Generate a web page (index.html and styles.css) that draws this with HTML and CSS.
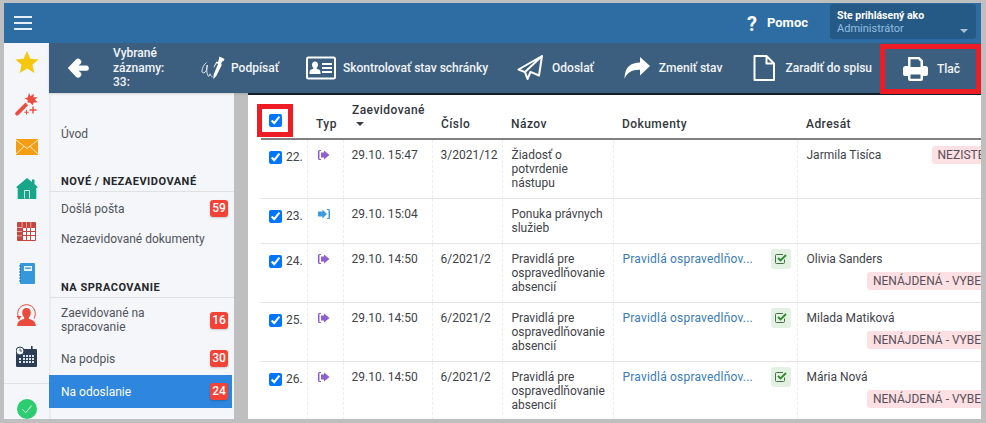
FILE: index.html
```html
<!DOCTYPE html>
<html lang="sk">
<head>
<meta charset="utf-8">
<title>Na odoslanie</title>
<link rel="stylesheet" href="styles.css">
</head>
<body>
<div class="app">
  <header class="topbar">
    <button class="burger" aria-label="Menu"><span></span><span></span><span></span></button>
    <div class="help"><span class="help-q">?</span><span class="help-t">Pomoc</span></div>
    <div class="user">
      <div class="user-l">Ste prihlásený ako</div>
      <div class="user-n">Administrátor</div>
      <i class="user-caret"></i>
    </div>
  </header>
  <div class="body">
    <nav class="rail">
      <svg class="ri ri-star" width="24" height="22" viewBox="0 0 24 22"><polygon fill="#f5c70f" points="12,0 15.4,7.8 23.6,8.4 17.4,13.8 19.3,22 12,17.6 4.7,22 6.6,13.8 .4,8.4 8.6,7.8"/></svg>
      <svg class="ri ri-wand" width="23" height="23" viewBox="0 0 23 23"><g fill="#ec4c3f"><path d="M.8 19.300 10.500 9.600l2.600 2.600-9.700 9.700a1.800 1.800 0 0 1-2.600-2.600z"/><polygon points="14,0 15.500,3.200 18.800,.8 18.500,4.300 22.500,4.200 19.800,6.800 22.800,9.300 18.800,9.500 17.500,12.300 15,9.500 12.500,9.800 12.800,7 9.500,5.600 12.800,4.300"/><path d="M17.300 13.500h1.400v2.800h2.800v1.400h-2.800v2.800h-1.400v-2.800h-2.800v-1.400h2.800zM11 17h1v1.700h1.700v1H12v1.800h-1v-1.800H9.300v-1H11z"/></g></svg>
      <svg class="ri ri-mail" width="22" height="16" viewBox="0 0 22 16"><rect width="22" height="16" fill="#f59d13"/><path d="M0 1 11 9.500 22 1M0 15 8 7.500M22 15 14 7.500" fill="none" stroke="#fff" stroke-width=".8"/></svg>
      <svg class="ri ri-home" width="22" height="21" viewBox="0 0 22 21"><path fill="#17a689" d="M11 0 16 4V1.500h2.500V6L22 9.300 20.300 10V21H1.700V10L0 9.300z"/><path fill="none" stroke="#d5f1ea" d="M8.500 20.500V12.500h5v8"/></svg>
      <svg class="ri ri-cal" width="19" height="19" viewBox="0 0 19 19"><rect width="19" height="19" rx="1" fill="#c7453f"/><path fill="#fff" d="M6 6h3v3H6zM10 6h3v3h-3zM14 6h4v3h-4zM6 10h3v3H6zM10 10h3v3h-3zM14 10h4v3h-4zM6 14h3v4H6zM10 14h3v4h-3zM14 14h4v4h-4z"/><path fill="#f0c9c7" d="M4.700 0h.7v6h-.7zM9.300 0h.7v5.700h-.7zM13.500 0h.7v5.700h-.7zM0 5h5v.7H0zM0 9.300h5v.7H0zM0 13.500h5v.7H0z"/></svg>
      <svg class="ri ri-book" width="16" height="21" viewBox="0 0 16 21"><rect x="1" width="15" height="21" rx="1" fill="#3498db"/><rect x="5" y="3" width="8" height="5" fill="#e8f3fb"/><rect x="6.200" y="4.500" width="5.600" height="1.400" fill="#3498db"/><path d="M0 3h2M0 6h2M0 9h2M0 12h2M0 15h2M0 18h2" stroke="#1f6fa8"/></svg>
      <svg class="ri ri-person" width="21" height="22" viewBox="0 0 21 22"><g fill="#ea4b3c"><path d="M10.500 4c2.700 0 4.300 2 4.300 4.600 0 2-.8 3.800-2 4.900v1.200c2.500 1 7 1.800 7 7.300H1.200c0-5.500 4.500-6.300 7-7.300v-1.200c-1.200-1.100-2-2.900-2-4.900C6.200 6 7.800 4 10.500 4z"/><path fill="none" stroke="#ea4b3c" d="M3 14.500C-.5 8 3.500.7 10.500.7c7 0 11 7.300 7.500 13.800"/><path d="M.5 12h5L3 16z"/></g></svg>
      <svg class="ri ri-clock" width="21" height="21" viewBox="0 0 21 21"><rect y="3" width="21" height="18" rx="1" fill="#2c3e55"/><path fill="#dfe4ea" d="M7 9h2v2H7zM10 9h2v2h-2zM13 9h2v2h-2zM16 9h2v2h-2zM7 12h2v2H7zM10 12h2v2h-2zM13 12h2v2h-2zM16 12h2v2h-2zM7 15h2v2H7zM10 15h2v2h-2zM13 15h2v2h-2zM16 15h2v2h-2zM3 15h2v2H3zM3 12h2v2H3z"/><rect x="15" width="1.600" height="4" fill="#2c3e55"/><circle cx="4" cy="5" r="4" fill="#f4f6f9" stroke="#2c3e55"/><path d="M4 2.500V5h2" fill="none" stroke="#2c3e55" stroke-width=".8"/></svg>
      <div class="rail-sep"></div>
      <svg class="ri ri-ok" width="20" height="20" viewBox="0 0 20 20"><circle cx="10" cy="10" r="10" fill="#2ecc71"/><path d="M5.500 10.500 8.700 13.700 14.700 6.500" fill="none" stroke="#e8fff1" stroke-width="1"/></svg>
    </nav>
    <div class="content">
      <div class="toolbar">
        <svg class="tb-back" width="22" height="22" viewBox="0 0 22 22"><path fill="#fff" d="M11 1.500c.8 0 1.400.4 2 1l.600.6c1.100 1.100 1.100 2.700 0 3.700L11.500 8.500h8c1.400 0 2.300 1 2.300 2.300v.6c0 1.300-.9 2.300-2.300 2.300h-8l2.100 1.900c1.100 1 1.100 2.600 0 3.700l-.6.600c-1.100 1.100-2.800 1.100-3.800 0L.8 11 9 2.600c.5-.7 1.200-1.100 2-1.100z"/></svg>
        <div class="tb-count">Vybrané záznamy:<br>33:</div>
        <div class="tool tool-sign">
          <svg width="24" height="24" viewBox="0 0 24 24"><path fill="#fff" d="M18.500.5 23.500 3 22.600 5l-1.200.2-1.400 2.800.9.700-5.500 11-2.900 3.200-.2-1.200.4-3.200 4.300-10.600-1.400-.7-2.500 4.300-.6-.4 3-5.600 1.500.7z"/><path fill="none" stroke="#fff" stroke-width=".8" d="M5.500 6.500C3 8.500 1 12 1 15c0 2 1.500 2.500 3 1.300C5.800 14.500 6.500 11 6.200 9c-.7 3-.8 8 1 11 1 1.300 1.300-1.500 1.800-2.200.5 1 1 2.800 2.500 3"/></svg>
          <span>Podpísať</span>
        </div>
        <div class="tool tool-check">
          <svg width="30" height="24" viewBox="0 0 30 24"><rect x="1" y="1.500" width="28" height="21" rx="1.500" fill="none" stroke="#fff" stroke-width="2"/><path fill="#fff" d="M9 5.500c2 0 3 1.400 3 3.200 0 1.200-.5 2.300-1.300 3v1c2 .5 3.800 1 3.800 4v1.300h-11V16.700c0-3 1.800-3.500 3.800-4v-1c-.8-.7-1.300-1.800-1.300-3C6 6.900 7 5.500 9 5.500zM16 7h10v2H16zM16 11h10v2H16zM16 15h10v2H16z"/></svg>
          <span>Skontrolovať stav schránky</span>
        </div>
        <div class="tool tool-send">
          <svg width="26" height="26" viewBox="0 0 26 26"><path fill="none" stroke="#fff" stroke-width="2" stroke-linejoin="round" d="M25 1 1.500 14.500l6.500 2.600L25 1 22 20.500l-8.500-3.600L10.500 24 8 17.100"/></svg>
          <span>Odoslať</span>
        </div>
        <div class="tool tool-share">
          <svg width="26" height="24" viewBox="0 0 26 24"><path fill="#fff" d="M16 1v5.500C7 6.800 .5 10.500.5 23c2.500-6.500 7.500-9.500 15.500-9.300V19.500L26 10z"/></svg>
          <span>Zmeniť stav</span>
        </div>
        <div class="tool tool-doc">
          <svg width="22" height="26" viewBox="0 0 22 26"><path fill="none" stroke="#fff" stroke-width="2" stroke-linejoin="round" d="M1.500 1h12L21 8.500V25H1.500zM13.500 1v7.500H21"/></svg>
          <span>Zaradiť do spisu</span>
        </div>
        <div class="tool tool-print">
          <svg width="25" height="24" viewBox="0 0 25 24"><path fill="#fff" d="M5 0h11.500L20 3.500V9h2.500A2.500 2.500 0 0 1 25 11.500V17a2 2 0 0 1-2 2h-3v3a2 2 0 0 1-2 2H7a2 2 0 0 1-2-2v-3H2a2 2 0 0 1-2-2V11.500A2.500 2.500 0 0 1 2.500 9H5zM7.500 2.300V10h10V4.800L15.200 2.300zM7.500 17.500V21.700h10V17.500z"/></svg>
          <span>Tlač</span>
        </div>
      </div>
      <div class="panes">
        <aside class="side">
          <a class="s-item s-uvod">Úvod</a>
          <h3 class="s-head">NOVÉ / NEZAEVIDOVANÉ</h3>
          <a class="s-item s-post">Došlá pošta<b class="cnt">59</b></a>
          <a class="s-item s-nez">Nezaevidované dokumenty</a>
          <h3 class="s-head s-head2">NA SPRACOVANIE</h3>
          <a class="s-item s-zae"><span>Zaevidované na<br>spracovanie</span><b class="cnt">16</b></a>
          <a class="s-item s-pod">Na podpis<b class="cnt">30</b></a>
          <a class="s-item s-act">Na odoslanie<b class="cnt">24</b></a>
        </aside>
        <main class="main">
          <table class="grid">
            <colgroup>
              <col class="c1"><col class="c2"><col class="c3"><col class="c4"><col class="c5"><col class="c6"><col class="c7">
            </colgroup>
            <thead>
              <tr>
                <th class="th-check"><input type="checkbox" checked><span class="hl"></span></th>
                <th>Typ</th>
                <th>Zaevidované<br><i class="sort"></i></th>
                <th>Číslo</th>
                <th>Názov</th>
                <th>Dokumenty</th>
                <th>Adresát</th>
              </tr>
            </thead>
            <tbody>
              <tr>
                <td class="num"><input type="checkbox" checked><span>22.</span></td>
                <td><svg class="ty ty-out" width="12" height="10" viewBox="0 0 12 10"><path fill="#8e5fd3" d="M6 2.500V.5L11.500 5 6 9.500v-2H3v-5zM0 1.500A1.500 1.500 0 0 1 1.500 0H3v1H1.500v8H3v1H1.500A1.500 1.500 0 0 1 0 8.500z"/></svg></td>
                <td>29.10. 15:47</td>
                <td>3/2021/12</td>
                <td>Žiadosť o potvrdenie nástupu</td>
                <td></td>
                <td><div class="addr"><span>Jarmila Tisíca</span><span class="badge badge-inline">NEZISTENÁ</span></div></td>
              </tr>
              <tr>
                <td class="num"><input type="checkbox" checked><span>23.</span></td>
                <td><svg class="ty" width="12" height="10" viewBox="0 0 12 10"><path fill="#3f9ae0" d="M4.500 2.500V.5L9 5 4.500 9.500v-2H0v-5zM9 0h1.500A1.500 1.500 0 0 1 12 1.500v7A1.500 1.500 0 0 1 10.500 10H9V9h1.500V1H9z"/></svg></td>
                <td>29.10. 15:04</td>
                <td></td>
                <td>Ponuka právnych služieb</td>
                <td></td>
                <td></td>
              </tr>
              <tr>
                <td class="num"><input type="checkbox" checked><span>24.</span></td>
                <td><svg class="ty ty-out" width="12" height="10" viewBox="0 0 12 10"><path fill="#8e5fd3" d="M6 2.500V.5L11.500 5 6 9.500v-2H3v-5zM0 1.500A1.500 1.500 0 0 1 1.500 0H3v1H1.500v8H3v1H1.500A1.500 1.500 0 0 1 0 8.500z"/></svg></td>
                <td>29.10. 14:50</td>
                <td>6/2021/2</td>
                <td>Pravidlá pre ospravedlňovanie absencií</td>
                <td><div class="doc"><a>Pravidlá ospravedlňov...</a><span class="sig"><svg width="12" height="12" viewBox="0 0 12 12"><path fill="none" stroke="#4a6b4a" d="M9.500 6.500v3a1 1 0 0 1-1 1h-7a1 1 0 0 1-1-1v-7a1 1 0 0 1 1-1H8"/><path fill="none" stroke="#2e8b2e" stroke-width="1.800" d="M3 5l2.500 2.500L11 2"/></svg></span></div></td>
                <td><div class="addr"><span>Olivia Sanders</span><span class="badge">NENÁJDENÁ - VYBERTE</span></div></td>
              </tr>
              <tr>
                <td class="num"><input type="checkbox" checked><span>25.</span></td>
                <td><svg class="ty ty-out" width="12" height="10" viewBox="0 0 12 10"><path fill="#8e5fd3" d="M6 2.500V.5L11.500 5 6 9.500v-2H3v-5zM0 1.500A1.500 1.500 0 0 1 1.500 0H3v1H1.500v8H3v1H1.500A1.500 1.500 0 0 1 0 8.500z"/></svg></td>
                <td>29.10. 14:50</td>
                <td>6/2021/2</td>
                <td>Pravidlá pre ospravedlňovanie absencií</td>
                <td><div class="doc"><a>Pravidlá ospravedlňov...</a><span class="sig"><svg width="12" height="12" viewBox="0 0 12 12"><path fill="none" stroke="#4a6b4a" d="M9.500 6.500v3a1 1 0 0 1-1 1h-7a1 1 0 0 1-1-1v-7a1 1 0 0 1 1-1H8"/><path fill="none" stroke="#2e8b2e" stroke-width="1.800" d="M3 5l2.500 2.500L11 2"/></svg></span></div></td>
                <td><div class="addr"><span>Milada Matiková</span><span class="badge">NENÁJDENÁ - VYBERTE</span></div></td>
              </tr>
              <tr>
                <td class="num"><input type="checkbox" checked><span>26.</span></td>
                <td><svg class="ty ty-out" width="12" height="10" viewBox="0 0 12 10"><path fill="#8e5fd3" d="M6 2.500V.5L11.500 5 6 9.500v-2H3v-5zM0 1.500A1.500 1.500 0 0 1 1.500 0H3v1H1.500v8H3v1H1.500A1.500 1.500 0 0 1 0 8.500z"/></svg></td>
                <td>29.10. 14:50</td>
                <td>6/2021/2</td>
                <td>Pravidlá pre ospravedlňovanie absencií</td>
                <td><div class="doc"><a>Pravidlá ospravedlňov...</a><span class="sig"><svg width="12" height="12" viewBox="0 0 12 12"><path fill="none" stroke="#4a6b4a" d="M9.500 6.500v3a1 1 0 0 1-1 1h-7a1 1 0 0 1-1-1v-7a1 1 0 0 1 1-1H8"/><path fill="none" stroke="#2e8b2e" stroke-width="1.800" d="M3 5l2.500 2.500L11 2"/></svg></span></div></td>
                <td><div class="addr"><span>Mária Nová</span><span class="badge">NENÁJDENÁ - VYBERTE</span></div></td>
              </tr>
            </tbody>
          </table>
        </main>
      </div>
    </div>
  </div>
</div>
</body>
</html>
```

FILE: styles.css
```css
* { box-sizing: border-box; }
html, body { margin: 0; height: 100%; }
body {
  background: #bfbfbf;
  font-family: Roboto, "Liberation Sans", sans-serif;
  font-size: 12px;
  line-height: 14px;
  color: #3f4247;
  overflow: hidden;
}
.app {
  position: absolute;
  left: 4px;
  top: 3px;
  width: 977px;
  height: 416px;
  display: flex;
  flex-direction: column;
  overflow: hidden;
}
.topbar {
  height: 40px;
  flex: none;
  background: #2d6da3;
  display: flex;
  align-items: center;
  padding-right: 5px;
}
.burger {
  width: 18px;
  margin-left: 10px;
  padding: 0;
  background: none;
  border: 0;
  display: flex;
  flex-direction: column;
  gap: 4px;
}
.burger span { display: block; height: 2px; background: #e6eef5; }
.help { margin-left: auto; display: flex; align-items: center; color: #fff; font-weight: 700; }
.help-q { font-size: 20px; width: 20px; padding-top: 1px; }
.help-t { font-size: 13px; }
.user {
  position: relative;
  margin-left: 22px;
  width: 146px;
  height: 35px;
  margin-top: -3px;
  padding: 5px 7px;
  background: #255a87;
  border-radius: 3px;
}
.user-l { color: #fff; font-weight: 700; font-size: 10.500px; line-height: 13px; }
.user-n { color: #93bde0; font-size: 11px; line-height: 14px; }
.user-caret {
  position: absolute;
  right: 8px;
  top: 25px;
  border: 4px solid transparent;
  border-top-color: #a9c2d8;
  border-bottom: 0;
}
.body { flex: 1; display: flex; min-height: 0; }
.rail {
  width: 45px;
  flex: none;
  background: #f4f6f9;
  display: flex;
  flex-direction: column;
  align-items: center;
  padding-top: 8px;
}
.ri { display: block; flex: none; }
.ri-wand { margin-top: 20px; }
.ri-mail { margin-top: 23px; }
.ri-home { margin-top: 23px; }
.ri-cal { margin-top: 23px; }
.ri-book { margin-top: 22px; }
.ri-person { margin-top: 20px; }
.ri-clock { margin-top: 20px; }
.rail-sep { align-self: stretch; height: 1px; background: #dfe1e4; margin-top: 16px; }
.ri-ok { margin-top: 15px; }
.content { flex: 1; min-width: 0; display: flex; flex-direction: column; }
.toolbar {
  height: 50px;
  flex: none;
  background: #3d5f7f;
  display: flex;
  align-items: center;
  color: #f2f5f8;
  font-weight: 500;
  position: relative;
  z-index: 1;
  box-shadow: 0 1px 2px rgba(0,0,0,.15);
}
.tb-back { margin-left: 18px; flex: none; }
.tb-count { margin-left: 24px; width: 60px; line-height: 14.500px; }
.tool { display: flex; align-items: center; white-space: nowrap; }
.tool svg { flex: none; display: block; }
.tool-sign { margin-left: 28px; gap: 6px; }
.tool-check { margin-left: 27px; gap: 7px; }
.tool-send { margin-left: 29px; gap: 9px; }
.tool-share { margin-left: 30px; gap: 9px; }
.tool-doc { margin-left: 31px; gap: 10px; }
.tool-print {
  margin-left: auto;
  width: 101px;
  height: 50px;
  margin-top: 2px;
  padding-left: 18px;
  gap: 9px;
  border: 5px solid #ee1c25;
}
.panes { flex: 1; display: flex; min-height: 0; }
.side {
  width: 185px;
  flex: none;
  background: #f5f6f9;
  box-shadow: inset 3px 0 3px -2px rgba(0,0,0,.08);
  color: #50545a;
}
.s-item { display: flex; align-items: center; padding: 0 6px 0 12px; justify-content: space-between; }
.s-uvod { margin-top: 34px; }
.s-head {
  margin: 0;
  padding: 0 0 2px 12px;
  font-size: 11px;
  line-height: 14px;
  font-weight: 700;
  letter-spacing: .5px;
  color: #24272b;
  border-bottom: 1px solid #dfe1e4;
}
.s-uvod + .s-head { margin-top: 34px; }
.s-post { margin-top: 8px; height: 17px; }
.s-nez { margin-top: 15px; }
.s-head2 { margin-top: 35px; }
.s-zae { margin-top: 8px; }
.s-zae .cnt { margin-top: 1px; }
.s-pod { margin-top: 16px; height: 17px; }
.s-act {
  margin-top: 8px;
  height: 33px;
  width: 183px;
  padding-right: 4px;
  background: #2e86de;
  color: #fff;
}
.cnt {
  width: 18px;
  height: 17px;
  border-radius: 3px;
  background: #f44336;
  color: #fff;
  font-size: 12px;
  line-height: 17px;
  text-align: center;
  font-weight: 500;
  box-shadow: 0 1px 2px rgba(0,0,0,.2);
  flex: none;
}
.main {
  margin-left: 14px;
  flex: 1;
  min-width: 0;
  background: #fff;
  border-top: 2px solid #14222e;
  padding-left: 13px;
  overflow: hidden;
  position: relative;
}
.grid { border-collapse: collapse; table-layout: fixed; width: 756px; }
.c1 { width: 46px; }
.c2 { width: 36px; }
.c3 { width: 89px; }
.c4 { width: 70px; }
.c5 { width: 111px; }
.c6 { width: 184px; }
.c7 { width: 220px; }
thead th {
  height: 44px;
  padding: 0 9px 7px;
  text-align: left;
  vertical-align: bottom;
  font-weight: 500;
  color: #33373c;
  border-bottom: 2px solid #808080;
  letter-spacing: .45px;
}
thead th:first-child { padding: 0 0 11px 8px; }
th.th-check { position: relative; }
.th-check input { display: block; margin: 0; }
.hl {
  position: absolute;
  left: -4px;
  top: 9px;
  width: 36px;
  height: 33px;
  border: 5px solid #ee1c25;
}
input[type=checkbox] { width: 13px; height: 13px; margin: 0; }
.sort {
  display: inline-block;
  margin: 0 0 0 4px;
  border: 4px solid transparent;
  border-top: 4px solid #3a3e44;
  border-bottom: 0;
  vertical-align: 2px;
}
tbody td {
  padding: 8px 9px;
  vertical-align: top;
  border-bottom: 1px solid #e4e4e4;
  border-left: 1px dashed #eeeeee;
}
tbody td:first-child { border-left: 0; }
tbody td:nth-child(3), tbody td:nth-child(4) { padding-left: 8px; }
tbody tr:last-child td { border-bottom: 0; }
tbody td.num { white-space: nowrap; padding: 10px 0 8px 8px; }
.num input { vertical-align: -3px; }
.num span { margin-left: 4px; }
.ty { display: block; margin: 2px 0 0 1px; }
.doc { display: flex; justify-content: space-between; margin-right: -3px; }
.doc a { color: #3a7cb8; white-space: nowrap; letter-spacing: .2px; }
.sig {
  width: 20px;
  height: 20px;
  margin-top: -3px;
  background: #e3f1e3;
  border-radius: 3px;
  display: flex;
  align-items: center;
  justify-content: center;
}
.addr { display: flex; flex-wrap: wrap; justify-content: space-between; row-gap: 6px; }
.badge {
  margin-left: auto;
  height: 18px;
  line-height: 18px;
  padding: 0 6px;
  background: #fde0e3;
  border-radius: 3px;
  white-space: nowrap;
  color: #57505a;
}
.badge-inline { margin-top: -2px; margin-bottom: -2px; margin-right: 1px; }
```
